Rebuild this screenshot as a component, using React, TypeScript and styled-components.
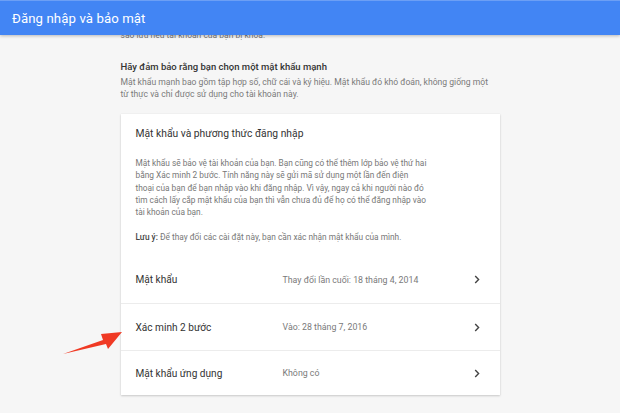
import React from "react";
import styled, { createGlobalStyle } from "styled-components";

const Global = createGlobalStyle`
  html, body { margin: 0; padding: 0; }
  body {
    background: #f6f6f6;
    font-family: Roboto, "Noto Sans", "Liberation Sans", sans-serif;
    -webkit-font-smoothing: antialiased;
  }
`;

const Page = styled.div`
  position: relative;
  width: 620px;
  height: 413px;
  overflow: hidden;
  background: #f6f6f6;
`;

const AppBar = styled.header`
  position: absolute;
  top: 0;
  left: 0;
  right: 0;
  height: 35px;
  background: #4285f4;
  box-shadow: 0 1px 3px rgba(0, 0, 0, 0.25);
  display: flex;
  align-items: center;
  padding-left: 12px;
  z-index: 2;
  border-top: 1px solid #6c9ff5;
  box-sizing: border-box;
`;

const AppTitle = styled.h1`
  margin: 0;
  font-size: 13.2px;
  font-weight: 400;
  color: #ffffff;
  letter-spacing: 0.1px;
`;

const Column = styled.main`
  width: 379px;
  margin: 0 auto;
  padding-top: 29px;
`;

const ClippedLine = styled.p`
  margin: 0;
  font-size: 8.5px;
  line-height: 12px;
  color: #777;
`;

const Heading = styled.h2`
  margin: 20px 0 0;
  font-size: 9.5px;
  line-height: 12px;
  font-weight: 500;
  color: #333;
`;

const Desc = styled.p`
  margin: 3px 0 0;
  font-size: 8.6px;
  line-height: 12px;
  color: #7a7a7a;
`;

const Card = styled.section`
  margin-top: 14px;
  background: #fff;
  box-shadow: 0 1px 2px rgba(0, 0, 0, 0.18), 0 0 1px rgba(0, 0, 0, 0.08);
`;

const CardTop = styled.div`
  padding: 13px 15px 0;
`;

const CardTitle = styled.h3`
  margin: 0;
  font-size: 10.3px;
  line-height: 14px;
  font-weight: 400;
  color: #333;
`;

const CardText = styled.p<{ $gap: number }>`
  margin: ${(p) => p.$gap}px 0 0;
  font-size: 8.3px;
  line-height: 12.3px;
  color: #777;
  white-space: nowrap;
`;

const Strong = styled.b`
  font-weight: 500;
  color: #444;
`;

const Rows = styled.div`
  margin-top: 13px;
`;

const Row = styled.div<{ $first?: boolean; $h: number }>`
  display: grid;
  grid-template-columns: 147px 1fr auto;
  align-items: center;
  height: ${(p) => p.$h}px;
  padding: 0 20px 0 15px;
  border-top: ${(p) => (p.$first ? "none" : "1px solid #ececec")};
  box-sizing: border-box;
`;

const RowLabel = styled.span`
  font-size: 10.1px;
  color: #333;
`;

const RowValue = styled.span`
  font-size: 8.8px;
  color: #7a7a7a;
`;

const Chevron = () => (
  <svg width="6" height="9" viewBox="0 0 6 9" aria-hidden>
    <path d="M1.2 1 L4.6 4.5 L1.2 8" fill="none" stroke="#444" strokeWidth="1.4" />
  </svg>
);

const ArrowMark = styled.svg`
  position: absolute;
  left: 58px;
  top: 325px;
  z-index: 3;
`;

const rows = [
  { label: "Mật khẩu", value: "Thay đổi lần cuối: 18 tháng 4, 2014", h: 47 },
  { label: "Xác minh 2 bước", value: "Vào: 28 tháng 7, 2016", h: 47 },
  { label: "Mật khẩu ứng dụng", value: "Không có", h: 45 },
];

const paragraph = [
  "Mật khẩu sẽ bảo vệ tài khoản của bạn. Bạn cũng có thể thêm lớp bảo vệ thứ hai",
  "bằng Xác minh 2 bước. Tính năng này sẽ gửi mã sử dụng một lần đến điện",
  "thoại của bạn để bạn nhập vào khi đăng nhập. Vì vậy, ngay cả khi người nào đó",
  "tìm cách lấy cắp mật khẩu của bạn thì vẫn chưa đủ để họ có thể đăng nhập vào",
  "tài khoản của bạn.",
];

export default function App() {
  return (
    <>
      <Global />
      <Page>
        <AppBar>
          <AppTitle>Đăng nhập và bảo mật</AppTitle>
        </AppBar>
        <Column>
          <ClippedLine>sao lưu nếu tài khoản của bạn bị khóa.</ClippedLine>
          <Heading>Hãy đảm bảo rằng bạn chọn một mật khẩu mạnh</Heading>
          <Desc>
            Mật khẩu mạnh bao gồm tập hợp số, chữ cái và ký hiệu. Mật khẩu đó khó đoán, không giống một
            <br />
            từ thực và chỉ được sử dụng cho tài khoản này.
          </Desc>
          <Card>
            <CardTop>
              <CardTitle>Mật khẩu và phương thức đăng nhập</CardTitle>
              <CardText $gap={16}>
                {paragraph.map((line, i) => (
                  <React.Fragment key={i}>
                    {line}
                    {i < paragraph.length - 1 && <br />}
                  </React.Fragment>
                ))}
              </CardText>
              <CardText $gap={12.5}>
                <Strong>Lưu ý:</Strong> Để thay đổi các cài đặt này, bạn cần xác nhận mật khẩu của mình.
              </CardText>
            </CardTop>
            <Rows>
              {rows.map((r, i) => (
                <Row key={r.label} $first={i === 0} $h={r.h}>
                  <RowLabel>{r.label}</RowLabel>
                  <RowValue>{r.value}</RowValue>
                  <Chevron />
                </Row>
              ))}
            </Rows>
          </Card>
        </Column>
        <ArrowMark width="66" height="34" viewBox="0 0 66 34" aria-hidden>
          <path d="M5 29 L45 15 L43 9 L64 7 L50 24 L48 19 Z" fill="#f03a24" />
        </ArrowMark>
      </Page>
    </>
  );
}
